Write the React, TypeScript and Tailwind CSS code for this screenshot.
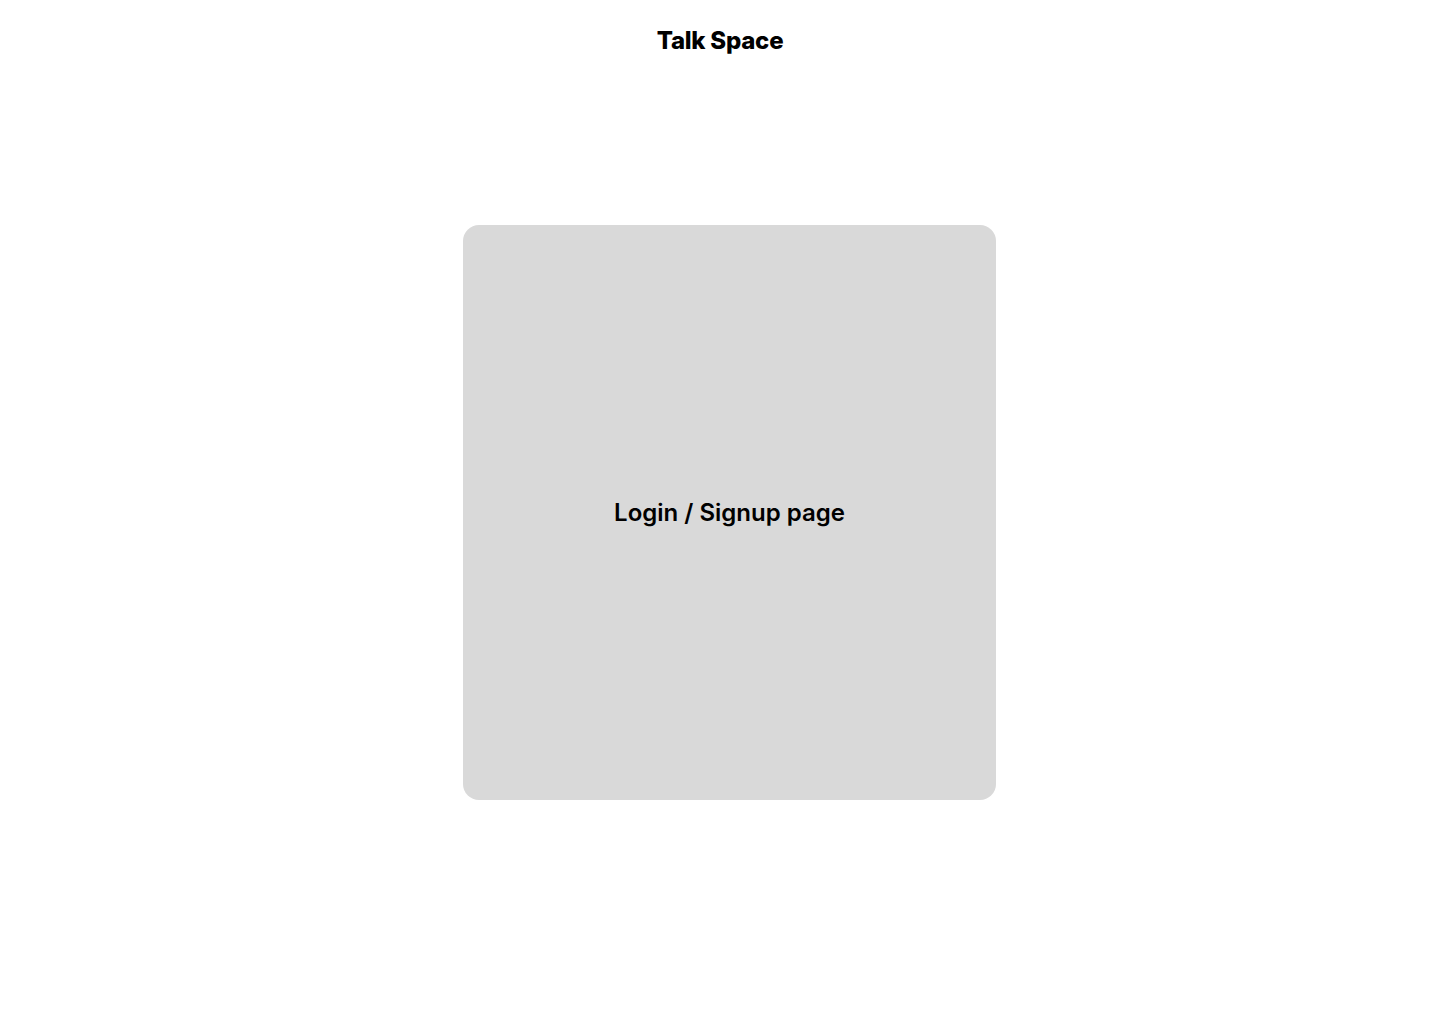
export default function App() {
  return (
    <div className="min-h-[1024px] w-full bg-white" style={{ fontFamily: "Inter, 'Noto Sans', sans-serif" }}>
      <header className="flex h-[82px] items-center justify-center">
        <h1 className="text-[24px] font-extrabold leading-none tracking-[-0.01em] text-black">Talk Space</h1>
      </header>
      <div className="mt-[143px] flex">
        <div className="ml-[463px] flex h-[575px] w-[533px] items-center justify-center rounded-2xl bg-[#d9d9d9]">
          <span className="text-[24px] font-semibold text-black">Login / Signup page</span>
        </div>
      </div>
    </div>
  );
}
